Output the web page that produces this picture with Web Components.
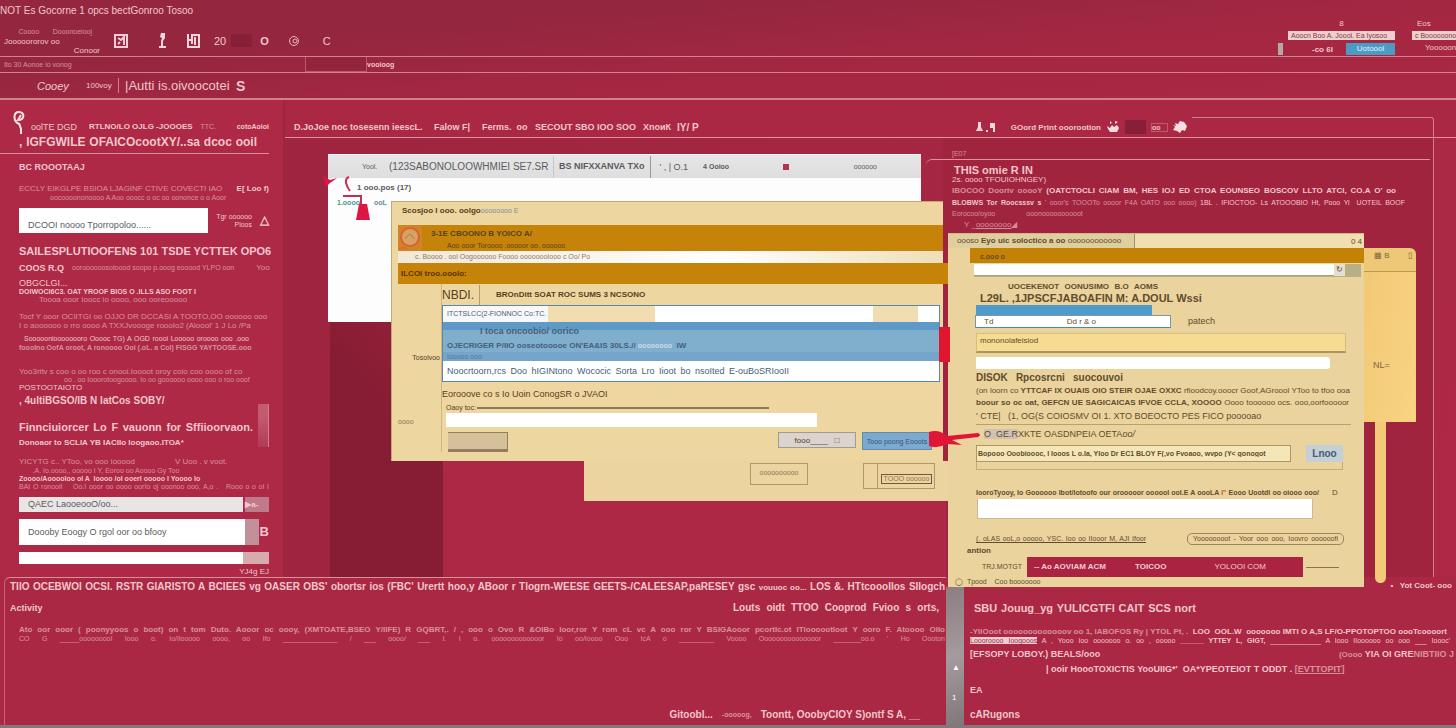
<!DOCTYPE html>
<html lang="en">
<head>
<meta charset="utf-8">
<title>Autti is.oivoocotei</title>
<style>
html,body{margin:0}
body{min-height:100vh;display:flex;flex-direction:column;background:#ab2844;color:#f1c6cd;font-family:"Liberation Sans",Arial,sans-serif;overflow-x:hidden}
work-area{flex:none;position:relative;z-index:1}
page-footer{flex:1}
</style>
</head>
<body>
<app-header></app-header>
<work-area>
  <side-bar slot="side"></side-bar>
  <desk-top slot="desk"></desk-top>
</work-area>
<page-footer></page-footer>
<script>
const base = `
*{box-sizing:border-box}
:host{display:block}
p,h1,h2,h3,ul{margin:0;padding:0;font-weight:inherit;list-style:none}
p,h1,h2,h3,.r,li{height:var(--h,10px);line-height:var(--h,10px);font-size:9px;white-space:nowrap;margin-top:var(--t,0);width:var(--w,auto)}
.r{display:flex;align-items:center;gap:var(--g,8px)}
.r>*{margin-top:0}
.j{text-align:justify;text-align-last:justify}
.b{font-weight:700}.d{opacity:.65}.end{margin-left:auto}
.f7{font-size:7px}.f8{font-size:8px}.f9{font-size:9px}.f10{font-size:10px}.f11{font-size:11px}.f12{font-size:12px}.f13{font-size:13px}.f14{font-size:14px}
input,button{font:inherit;margin:0;border:0;padding:0;border-radius:0;color:inherit;display:block}
a{color:inherit;text-decoration:none}
svg{display:block;flex:none}
`;
function define(name, css, html){
  customElements.define(name, class extends HTMLElement{
    constructor(){ super(); this.attachShadow({mode:'open'}).innerHTML = '<style>'+base+css+'</style>'+html; }
  });
}

define('app-header', `
:host{background:linear-gradient(175deg,#952640 0 30%,#a42742 60%,#ab2844)}
.title{--h:21px;font-size:10px}
.tools{display:flex;height:36px;align-items:center;border-bottom:1px solid #d3808f;position:relative}
.left{width:100px;padding-top:4px}
.icons{display:flex;align-items:center;gap:23px;padding-left:14px;font-size:11px;padding-top:4px}
.box{width:21px;height:13px;background:#861f37}
.right{margin-left:auto;width:178px;display:grid;grid-template-columns:8px 107px 1fr;column-gap:2px;row-gap:3px;font-size:8px;align-self:end;padding-bottom:1px}
.chip{height:9px;line-height:9px;font-size:7px;background:#f0d0cf;color:#7d3848;padding-left:3px;white-space:nowrap}
.blue{height:12px;line-height:12px;width:49px;background:#4a9cc5;color:#e7f2f8;text-align:center;margin-left:auto}
.sub{display:flex;height:16px;align-items:center;border-bottom:1px solid #d3808f}
.cell{width:62px;height:15px;margin-left:226px;background:#92243c;border:1px solid #bd5a6c;border-top:0}
nav{display:flex;height:27px;align-items:center;border-bottom:2px solid #cf8190;padding-left:37px;white-space:nowrap}
`, `
<p class="title">NOT Es Gocorne 1 opcs bectGonroo Tosoo</p>
<div class="tools">
  <div class="left"><p class="f7 d" style="text-align:right;padding-right:8px">Coooo &nbsp; &nbsp; &nbsp; Dooonoeiooj</p><p class="f8" style="padding-left:4px">Jooooororov oo</p><p class="f8" style="--h:8px;text-align:right">Conoor</p></div>
  <div class="icons">
    <svg width="15" height="14" viewBox="0 0 15 14" fill="none" stroke="#f3ccd2" stroke-width="2"><path d="M1 1h12v12H1zM4 4l3 2 3-3v8M4 10l2-2"/></svg>
    <svg style="margin-left:6px" width="9" height="18" viewBox="0 0 9 18" fill="#f6d4d9"><path d="M3 1h4v5L5 9v5h3v2H1v-2h2V9l1-3-2-1z"/></svg>
    <svg style="margin-left:-4px" width="15" height="16" viewBox="0 0 15 16" fill="none" stroke="#f6d4d9" stroke-width="2"><path d="M2 1v13h11V2H6v9M9 4v8M2 7h4"/></svg>
    <span style="margin-left:-10px">20</span><span class="box" style="margin-left:-18px"></span><b style="margin-left:-15px">O</b>
    <svg style="margin-left:-3px" width="11" height="11" viewBox="0 0 11 11" fill="none" stroke="#e9b4bd" stroke-width="1"><circle cx="5" cy="6" r="4.5"/><circle cx="6" cy="6" r="2"/></svg>
    <span>C</span>
  </div>
  <div class="right">
    <span></span><span style="text-align:center">8</span><span style="padding-left:20px">Eos</span>
    <span></span><span class="chip">Aoocn Boo A. Joool. Ea Iyosoo</span><span class="chip" style="margin-left:15px">c Boooooono</span>
    <span style="background:#b3a9a6;width:5px"></span><div style="display:flex;align-items:center"><b style="padding-left:24px">-co 6I</b><span class="blue">Uotoool</span></div><span style="text-align:right">Yooooon</span>
  </div>
</div>
<div class="sub"><span class="f7 d" style="width:79px">&nbsp; Ito 30 Aonoe io vonog</span><span class="cell"></span><b class="f7">vooioog</b></div>
<nav aria-label="Main"><a href="#c" class="f11" style="width:49px"><i>Cooey</i></a><a href="#v" class="f8" style="width:32px">100voy</a><a href="#a" class="f13" style="border-left:1px solid #d3808f;padding-left:6px;width:118px">|Autti is.oivoocotei</a><b class="f14">S</b></nav>
`);

define('work-area', `
:host{display:grid;grid-template-columns:minmax(0,285fr) minmax(0,1171fr)}
`, `<slot name="side"></slot><slot name="desk"></slot>`);

define('side-bar', `
:host{background:#ad2946;border-right:2px solid #9c2641;padding:20px 14px 0 19px;position:relative;white-space:nowrap}
.rule{height:1px;background:#d98f9c;margin:3px 0 0 -19px}
input{background:#fff;color:#5b5b60;width:var(--w,226px);height:var(--ih);margin-top:var(--t);font-size:9px;padding-left:9px}
.scroll{position:absolute;right:14px;top:304px;width:11px;height:43px;background:linear-gradient(#c35a6f 30%,#b13a54);border-right:1px solid #cf7f8d}
.pin{position:absolute;left:13px;top:10px}
`, `
<svg class="pin" width="14" height="26" viewBox="0 0 14 26" fill="none" stroke="#fbe3e5" stroke-width="2"><path d="M6 14C0 11 0 2 6 2s6 8-1 8l3-5M6 13l2 6v5"/></svg>
<div class="r" style="--h:14px;--g:8px"><span class="f9" style="width:62px;padding-left:12px">oolTE DGD</span><span class="f8 b">RTLNO/LO OJLG -JOOOES</span><span class="f7 d">TTC.</span><span class="f7 b end">cotoAoioi</span></div>
<h1 class="b f12 j" style="--h:16px;--w:238px">, IGFGWILE OFAICOcootXY/..sa dcoc ooil</h1>
<div class="rule"></div>
<h2 class="b f9" style="--t:8px">BC ROOOTAAJ</h2>
<div class="r" style="--t:12px"><span class="j d f8" style="width:202px">ECCLY EIKGLPE BSIOA LJAGINF CTIVE COVECTI IAO</span><b class="end f8">E[&nbsp;Loo f)</b></div>
<p class="f7 d j" style="--h:8px;--w:172px;margin-left:31px">oocoooononoooo A Aoo ooocc o oc oo oononce o o Aoor</p>
<div class="r" style="--h:25px;--t:6px"><input aria-label="Search" style="--ih:25px;--w:193px;padding-top:10px" value="DCOOI noooo Tporropoloo......"><span class="f7" style="line-height:8px;text-align:right">Tgr oooooo<br>Ploos</span><b class="end f12">&#9651;</b></div>
<h2 class="b f11 j" style="--h:18px;--t:9px;--w:246px">SAILESPLUTIOOFENS 101 TSDE YCTTEK OPO6</h2>
<div class="r" style="--h:16px"><b class="f9">COOS R.Q</b><span class="d f7 j" style="flex:1">ooroooooosotoood soopo p.ooog eooood YLPO oon</span><span class="f8 d" style="padding-left:14px">Yoo</span></div>
<p style="--t:3px;--h:9px">OBGCLGI...</p>
<p class="b j f7" style="--h:8px;--w:176px">DOIWOCI6C3. OAT YROOF BIOS O .ILLS ASO FOOT I</p>
<p class="d f8" style="--h:8px;margin-left:20px">Toooa ooor Ioocc io oooo, ooo ooreooooo</p>
<p class="j d f8" style="--t:8px;--h:9px;--w:248px">Tocf Y ooor OCIITGI oo OJJO DR DCCASI A TOOTO,OO oooooo ooo</p>
<p class="j d f8" style="--h:9px;--w:230px">I o aoooooo o rro oooo A TXXJvoooge roooIo2 (Aloool' 1 J Lo /Pa</p>
<p class="j f7" style="--t:5px;--h:8px;--w:225px;margin-left:5px">Sooooonioooooooro Ooooc TG) A OGD roooi Looooo oroooo ooo .ooo</p>
<p class="j d f7 b" style="--w:230px">foooIno OofA oroot, A ronoooo Ool (.oL. a CoI) FISGG YAYTOOSE.ooo</p>
<p class="j d f8" style="--t:15px;--h:8px;--w:222px">Yoo3ritv s coo o oo roo c onooi.Ioooot oroy coio coo oooo of co</p>
<p class="j d f7" style="--h:8px;--w:184px;margin-left:45px">oo . oo Iooorotoogoooo. Io oo goooooo oooo ooo o roo ooof</p>
<p class="f8" style="--h:8px">POSTOOTAIOTO</p>
<h2 class="b f10" style="--t:3px;--h:12px">, 4ultiBGSO/IB N IatCos SOBY/</h2>
<h2 class="b f11 j" style="--t:12px;--h:16px;--w:234px">Finnciuiorcer Lo F vauonn for Sffiioorvaon.</h2>
<p class="b j f8" style="--t:2px;--h:12px;--w:161px">Donoaor to SCLIA YB IACIIo Ioogaoo.ITOA*</p>
<p class="d" style="--t:8px;font-size:8px">YICYTG c.. YToo, vo ooo Iooood &nbsp; &nbsp; &nbsp; &nbsp; &nbsp; &nbsp; &nbsp; &nbsp; &nbsp;V Uoo . v voot.</p>
<p class="j d f7" style="--h:8px;--w:155px">&nbsp; &nbsp; &nbsp; &nbsp;.A. Io.oooo,, ooooo I Y, Eoroo oo Aoooo Gy Too</p>
<p class="j f7 b" style="--h:8px;--w:170px">Zoooo/AooooIoo oI A &nbsp;Ioooo /oI ooerI ooooo I Yoooo Io</p>
<p class="j d f7" style="--h:8px;--w:250px">BAI O ronooiI &nbsp; &nbsp;Oo.I ooor oo oooo oorIo oj ooonoo ooo, A,o . &nbsp; Rooo o o oI I</p>
<div class="r" style="--h:15px;--t:6px;--g:2px"><input aria-label="Address" style="--ih:15px;background:#e9e5e5" value="QAEC LaooeooO/oo..."><span style="width:24px;height:15px;line-height:15px;background:#bf7b89" class="f8 b">&#9654;a-</span></div>
<div class="r" style="--h:26px;--t:7px;--g:0"><input aria-label="Entry" style="--ih:26px" value="Doooby Eoogy O rgol oor oo bfooy"><span style="width:14px;height:26px;background:#c1909b"></span><b class="end f13">B</b></div>
<div class="r" style="--h:12px;--t:7px;--g:0"><input aria-label="Extra" style="--ih:12px"><span style="width:26px;height:12px;background:#d7aaaf"></span></div>
<p class="f8" style="--t:3px;text-align:right">YJ4g EJ</p>
<div class="scroll"></div>
`);

define('white-window', `
:host{background:#fdfdfd;color:#5c5a5e}
.top{height:24px;background:linear-gradient(#e7e6e6,#dededf);display:flex;align-items:center;white-space:nowrap;gap:9px;padding-left:34px;border-top:1px solid #f8f8f8}
.code{width:155px;text-align:right}
.tabs{height:22px;border-right:1px solid #9b9999;border-left:1px solid #c8c7c7;padding:0 5px;line-height:20px}
.mark{width:6px;height:6px;background:#b3344e;margin-left:45px}
`, `
<div class="top"><span class="f7" style="width:18px">Yool.</span><span class="f10 code">(123SABONOLOOWHMIEI SE7.SR</span><span class="f9 b tabs">BS NIFXXANVA TXo</span><span class="f9">' , | O.1</span><b class="f7" style="padding-left:6px">4 Ooioo</b><span class="mark"></span><span class="f7 end" style="padding-right:44px">oooooo</span></div>
<p class="b f8" style="--t:5px;padding-left:29px">1 ooo.pos (17)</p>
<p class="b f7" style="--t:5px;padding-left:9px;color:#3c9a92">1.oooo <span style="color:#71869b;padding-left:12px">ooL</span></p>
`);

define('form-window', `
:host{background:#edd6a0;color:#574123;border:1px solid #c5a873;border-width:1px 0 0 1px;padding:3px 0 0 6px}
.gold{background:#c58409;display:flex}
.bar{height:26px;margin-top:8px;align-items:center;gap:9px}
.bar p{--h:12px}
.strip{background:linear-gradient(90deg,#f2e8d6,#fff 60%,#eedeb8);height:12px;padding-left:17px;color:#8a7a6e}
.two{height:21px;align-items:center;padding-left:3px;color:#5c3205;margin-right:-6px}
.inner{display:grid;grid-template-columns:44px 1fr;padding-right:4px}
.side{border-right:1px solid #d2b47d;text-align:right}
.list{border:1px solid #5a87ad;height:77px;background:#fff;color:#456079;overflow:hidden}
.list li{padding-left:4px}
.field{background:#fff;width:371px;height:14px;margin:1px 0 0 4px}
.acts{display:flex;margin:5px 8px 0 6px;height:20px;align-items:flex-start}
.acts button{height:18px;font-size:9px;white-space:nowrap}
`, `
<p class="b f8" style="--h:12px;padding-left:4px">Scosjoo I ooo. oolgo<span class="f7" style="color:#7890a5;font-weight:400">oooooooo E</span></p>
<div class="gold bar">
<svg width="24" height="26" viewBox="0 0 24 26"><rect width="24" height="26" fill="#cf8428"/><circle cx="12" cy="12" r="9" fill="#d8a064" stroke="#d8642c" stroke-width="2"/><path d="M7 14q5-9 9 0" fill="none" stroke="#a88044"/><path d="M0 24q7-5 10 0z" fill="#dd6c32"/></svg>
<div><h2 class="b f8" style="--h:15px">3-1E CBOONO B YOICO A/</h2><p class="f7" style="--h:10px;padding-left:16px">Aoo ooor Toroooo .ooooor oo. oooooo</p></div></div>
<div class="strip f7" style="line-height:12px">c. Boooo . ool Oogoooooo Foooo oooooooIooo c Oo/ Po</div>
<div class="gold two b f8">ILCOI troo.ooolo:</div>
<div class="inner">
<div class="side"><p class="f7" style="--t:69px;padding-right:1px">Tosolvoo</p><p class="f7 d" style="--t:54px;text-align:left">oooo</p></div>
<div>
<h2 class="r" style="--h:20px;--t:1px;--g:16px"><span class="f12" style="width:38px;border-right:1px solid #b89b69">NBDI.</span><span class="f8 b">BROnDitt SOAT ROC SUMS 3 NCSONO</span></h2>
<ul class="list">
<li class="f7" style="--h:16px;background:linear-gradient(90deg,#f8f8fa 105px,#f1ddb0 105px 212px,#fff 212px 430px,#f0deb3 430px 475px,#fff 475px)">ITCTSLCC(2-FIONNOC Co:TC.</li>
<li class="b" style="--h:18px;padding-left:37px;background:linear-gradient(#5f99c8 8px,#80aecd 8px)">I toca oncoobio/ oorico</li>
<li class="b f8" style="--h:12px;background:#80aecd;width:496px">OJECRIGER P/IIO ooseotooooe ON'EA&amp;IS 30LS.// <span class="f7" style="color:#d0dbe7">oooooooo</span> &nbsp;IW</li>
<li style="--h:9px;background:#75a5ca;color:#50789b" class="f7">Iooooo ooo</li>
<li class="j" style="--h:20px;--w:346px">Noocrtoorn,rcs Doo hIGINtono Wococic Sorta Lro Iioot bo nsoIted E-ouBoSRIooII</li>
</ul>
<p style="--t:7px">Eorooove co s Io Uoin ConogSR o JVAOI</p>
<div class="r f7" style="--h:8px;--t:5px;--g:1px;padding-left:4px"><span class="f7">Oaoy toc:</span><span style="width:292px;height:2px;background:#8c7a59"></span></div>
<input class="field" aria-label="Value">
<div class="acts"><button aria-label="Blank" style="width:60px;background:#d4c19a;border:1px solid #927e5f;border-width:1px 1px 3px 0;height:20px"></button>
<button style="margin-left:auto;width:78px;background:#dbd3ce;border:1px solid #a39b90;height:16px;font-size:8px">fooo____ &nbsp; &#9633;</button>
<button style="margin-left:6px;width:70px;background:#7da9d1;color:#37556f;font-size:7px;border:1px solid #608caf">Tooo poong Eooots</button></div>
</div></div>
`);

define('lower-strip', `
:host{background:#ebd4a0;color:#8b7553}
.r{height:40px;align-items:flex-start;padding:2px 13px 0 166px}
.r>*{border:1px solid #b29868;height:22px;font-size:7px;line-height:18px;text-align:center;width:58px}
`, `<div class="r"><span>oooooooooo</span><div class="end" style="width:72px;display:flex;height:26px"><span style="width:14px;border-right:1px solid #b29868"></span><span style="border:1px solid #6c5b41;height:10px;line-height:8px;flex:1;margin:10px 2px 0 3px">TOOO oooooo</span></div></div>`);

define('folder-tab', `
:host{color:#7b6540}
.tab{background:#efc877;height:24px;border-radius:0 6px 0 0;padding:3px 4px 0 10px;border-bottom:1px solid #bf9a4c}
.body{background:linear-gradient(100deg,#f1c976,#fad383);height:150px;padding:88px 0 0 9px}
.stem{margin-left:11px;width:11px;height:161px;background:#f3cb78;border-radius:0 0 6px 6px}
`, `<div class="tab"><div class="r f8">&#9638; B<span class="end">&#9647;</span></div></div><div class="body"><p>NL=</p></div><div class="stem"></div>`);

define('record-window', `
:host{background:#ead39d;color:#614c2e;border-top:1px solid #cfb984;padding-bottom:1px;white-space:nowrap}
.title{display:flex;height:14px;align-items:center;justify-content:space-between;background:#f0dfb0;padding-right:2px}
.title span:first-child{width:187px;background:#dfcf9f;padding-left:9px;line-height:14px;border-right:1px solid #9c9278}
.gold{background:#c38106;height:15px;margin-left:22px;padding:5px 0 0 10px}
.search{display:flex;height:13px;margin:1px 3px 0 26px;background:#b9af84}
.search input{flex:1;height:12px;background:#fff;border-bottom:1px solid #aaa087}.search button{width:11px;height:12px;background:#e4dfd0;font-size:8px;line-height:10px;margin-right:16px}
.c{padding:0 13px 0 28px}
.fld{height:13px;background:#fff;border:1px solid #7e95ae;border-bottom-color:#3f8bc2;width:196px;padding:0 30px 0 8px;font-size:8px;margin-left:-1px}
.cream{display:block;width:370px;height:20px;background:#f6dc92;border:1px solid #d6be7c;border-bottom:2px solid #aa955f;margin-top:5px;padding:0 0 5px 3px;font-size:8px}
.white{width:354px;height:12px;background:#fff;margin:4px 0 0;border-radius:0 3px 3px 0}
.row{display:flex;height:17px;justify-content:space-between;width:367px;margin-top:2px}
.row input{width:315px;background:#f5e6b8;border:1px solid #ad9765;font-size:7px;font-weight:700;padding-left:1px}
.row button{width:37px;background:#c3d0d6;color:#475b72;font-size:10px;font-weight:700}
.red{display:flex;background:#aa2442;color:#f2cdd2;width:276px;height:20px;align-items:center;gap:29px;padding-left:7px}
`, `
<div class="title f8"><span>oooso <b>Eyo uic soloctico a oo</b> oooooooooooo</span><span>0 4</span></div>
<div class="gold"><p class="f7 b" style="--h:8px">c.ooo o</p></div>
<div class="search"><input aria-label="Find"><button aria-label="Go">&#8635;</button></div>
<div class="c">
<p class="b j f8" style="--t:4px;--h:11px;--w:150px;margin-left:32px">UOCEKENOT OONUSIMO B.O \ AOMS</p>
<h2 class="b f11 j" style="--h:13px;--w:211px;margin-left:4px">L29L. ,1JPSCFJABOAFIN M: A.DOUL Wssi</h2>
<div style="width:176px;height:10px;background:#509bce"></div>
<div class="r" style="--h:13px;--g:17px"><input class="fld" aria-label="Date" value="Td                                 Dd r &amp; o"><span class="f9">patech</span></div>
<input class="cream" aria-label="Member" value="mononolafeisiod">
<input class="white" aria-label="Details">
<h3 class="b f10 j" style="--h:14px;--t:2px;--w:147px">DISOK Rpcosrcni suocouvoi</h3>
<p class="b j" style="--h:12px;--w:374px;font-size:8px"><span style="font-weight:400">(on loorn co</span> YTTCAF IX OUAIS OIO STEIR OJAE OXXC <span style="font-weight:400">rfioodcoy.ooocr Goof,AGroool YToo to tfoo ooa</span></p>
<p class="b j" style="--h:12px;--w:373px;font-size:8px">boour so oc oat, GEFCN UE SAGICAICAS IFVOE CCLA, XOOOO <span style="font-weight:400">Oooo toooooo ocs. ooo,oorfooooor</span></p>
<p class="j" style="--h:15px;--w:276px;font-size:9px">' CTE| &nbsp; (1, OG(S COIOSMV OI 1. XTO BOEOCTO PES FICO pooooao</p>
<div style="height:1px;background:#baa06f"></div>
<p style="--h:18px;padding-left:8px"><span style="background:#cfc2b5">O &nbsp;GE.R</span>XKTE OASDNPEIA OETA<i>oo/</i></p>
<div class="row"><input aria-label="Query" value="Bopooo Ooobioooc, I Iooos L o.Ia, YIoo Dr EC1 BLOY F(,vo Fvoaoo, wvpo (Y&lt; gonogot"><button>Lnoo</button></div>
<div style="height:8px;border:1px solid #c5ac77;border-top:0;width:367px"></div>
<div class="r" style="--h:13px;--t:16px;--g:13px"><span class="f7 b j" style="width:343px">IooroTyooy, Io Goooooo Ibot/Iotoofo our orooooor oooooI ooI.E A oooLA <span style="color:#ca592a">I"</span> Eooo Uootdl oo oiooo ooo/</span><span class="f8">D</span></div>
<input style="width:336px;height:20px;background:#fff;border:1px solid #c9bb92;border-top:0;margin-left:1px" aria-label="Notes">
<div class="r" style="--h:14px;--t:13px;width:368px"><span class="f7 j" style="width:170px;text-decoration:underline">(. oLAS ooL,o ooooo, YSC. Ioo oo IIooor M, AJI Ifoor</span><span class="end f7 j" style="width:157px;border:1px solid #9b8559;border-radius:5px;line-height:10px;padding:0 5px">Yoooooooot - Yoor ooo ooo, Ioovro oooooofi</span></div>
<p class="b f8" style="--h:10px;margin-left:-9px">antion</p>
<div class="r" style="--h:20px;--g:3px;--t:1px;width:376px"><span style="width:48px;padding-left:6px" class="f7">TRJ.MOTGT</span><div class="red f8"><b>-- Ao AOVIAM ACM</b><b>TOICOO</b><span class="end" style="padding-right:37px">YOLOOI COM</span></div><span style="width:33px;height:1px;background:#8b744c"></span></div>
<p class="f7" style="--h:9px;margin-left:-21px">&#9711; &nbsp;Tpood &nbsp; &nbsp;Coo booooooo</p>
</div>
`);

define('desk-top', `
:host{position:relative;background:linear-gradient(100deg,#9e2440,#a82743 70%,#ad2946)}
.head{display:flex;height:38px;border-bottom:1px solid #dd929d;padding:17px 268px 0 9px;align-items:center;white-space:nowrap;background:#ab2844}
.pane{margin-left:658px;padding:11px 0 0 9px;margin-right:22px;position:relative;height:439px;border-right:1px solid #d17d8b;white-space:nowrap;background:#a1243f}
.pane .top{border-top:1px solid #dd929d;margin:0 3px 0 -26px;border-radius:8px 0 0 0;height:6px}
.corner{position:absolute;right:22px;top:17px;width:242px;height:21px;border:1px solid #d17d8b;border-width:1px 1px 0 0;border-radius:0 3px 0 0}
.shade{position:absolute;left:45px;top:222px;width:113px;bottom:0;background:linear-gradient(48deg,#861d34 60%,#982039)}
.mid{position:absolute;left:158px;top:360px;width:503px;bottom:0;background:#ad2845}
white-window,form-window,lower-strip,record-window,folder-tab,.pin,.tab,.arrow{position:absolute}
white-window{left:43px;top:54px;width:593px;height:168px}
form-window{left:106px;top:101px;width:552px;height:260px}
lower-strip{left:299px;top:361px;width:364px}
record-window{left:663px;top:133px;width:416px}
folder-tab{left:1079px;top:148px;width:52px}
.tab{left:654px;top:227px;width:11px;height:35px;background:#e0162f}
`, `
<div class="head"><b class="f9" style="width:140px">D.JoJoe noc tosesenn ieescL.</b><b class="f9" style="width:48px">Falow F|</b><b class="f9" style="width:53px">Ferms. &nbsp;oo</b><b class="f9" style="width:108px">SECOUT SBO IOO SOO</b><b class="f9" style="width:34px">XnoиК</b><b class="f10">IY/ P</b>
<span class="end b f9" style="display:flex;align-items:center;gap:5px"><svg width="20" height="12" viewBox="0 0 20 12" fill="#f6d4d9"><path d="M2 1h3v5l2 4H0l2-4zM10 9h2v2h-2zM14 2h5v9h-2V7h-3z"/></svg><span style="padding-left:10px" class="f8">GOord Print ooorootion</span>
<svg width="14" height="14" viewBox="0 0 14 14" fill="#f8dce0"><path d="M1 6l3 2 2-3 2 2 3-2 2 3-2 4H4L2 9zM4 1l2 2-2 1zM9 1l3 1-3 2z"/></svg><span style="width:21px;height:14px;background:#861f37"></span><span class="f7" style="width:17px;border:1px solid #bd5a6c">oo</span><svg width="15" height="14" viewBox="0 0 15 14" fill="#f8dce0"><path d="M2 3l3 1 2-3 4 1 3 4-2 5-3-1-2 3-3-2-4-1 2-3-2-2 3 1z"/></svg></span></div>
<div class="corner"></div>
<section class="pane"><p class="f7 d" style="--h:10px">[E07</p><div class="top"></div>
<h2 class="b f11" style="--h:10px;padding-left:2px">THIS omie R IN</h2>
<p class="f8" style="--h:10px">2s. oooo TFOUIOHNGEY)</p>
<p class="j b f8" style="--h:12px;--w:444px"><span class="d">IBOCOO Dooriv ooooY</span> (OATCTOCLI CIAM BM, HES IOJ ED CTOA EOUNSEO BOSCOV LLTO ATCI, CO.A O' oo</p>
<p class="j f7" style="--h:12px;--w:453px"><b>BLOBWS Tor Roocsssv s</b> <span class="d">' ooor's TOOOTo oooor F4A OATO ooo oooo)</span> 1BL . IFIOCTOO- Ls ATOOOBIO Ht, Pooo Yi &nbsp;UOTEIL BOOF</p>
<p class="f7 d" style="--h:10px">Eorocoo/oyoo &nbsp; &nbsp; &nbsp; &nbsp; &nbsp; &nbsp; &nbsp; &nbsp;ooonoooooooooot</p>
<p class="f8 d" style="--h:12px;padding-left:12px">Y _<u>oooooooo</u>&#9698;</p></section>
<div class="shade"></div><div class="mid"></div>
<white-window></white-window><lower-strip></lower-strip><form-window></form-window><folder-tab></folder-tab><record-window></record-window>
<svg class="pin" style="left:32px;top:70px" width="56" height="52" viewBox="0 0 56 52"><path d="M6 6l7 4 7-2-7 5-4 4zM42 34h8l3 16H39z" fill="#dc1744"/><path d="M32 7c-6 2-2 10 1 14M26 26h18v8" fill="none" stroke="#c92d54" stroke-width="2"/></svg>
<div class="tab"></div>
<svg class="arrow" style="left:644px;top:330px" width="52" height="20" viewBox="0 0 52 20"><path d="M0 2q10-3 18 4l31-3q4 2 0 4l-26 3 10 5-15-1q-10 5-18 2z" fill="#e11637"/></svg>
`);

define('page-footer', `
:host{display:grid;grid-template-columns:minmax(0,946fr) minmax(0,18fr) minmax(0,492fr);border-bottom:3px solid #83777a;background:#ab2844;position:relative;white-space:nowrap}
.l{margin-left:4px;border-top:1px solid #db8f9b;border-left:1px solid #c76476;border-radius:6px 0 0 0;display:flex;flex-direction:column;padding:2px 1px 5px 5px;min-height:140px}
.m{background:linear-gradient(160deg,#8c7d81,#a59a9d 50%,#81767a);margin-top:10px;color:#fff;font-size:8px;padding:66px 0 0 6px;line-height:30px}
.rr{padding:5px 0 5px 6px;display:flex;flex-direction:column}
`, `
<section class="l">
<p class="j b" style="--h:14px;font-size:10px">TIIO OCEBWOI OCSI. RSTR GIARISTO A BCIEES vg OASER OBS' obortsr ios (FBC' Urertt hoo,y ABoor r Tlogrn-WEESE GEETS-/CALEESAP,paRESEY gsc <span class="f8">vouuoc oo...</span> LOS &amp;. HTtcoooIIos SIIogch</p>
<div class="r b" style="--t:7px;--h:14px"><span class="f9">Activity</span><span class="end j" style="width:206px;margin-right:6px;font-size:10px">Louts oidt TTOO Cooprod Fvioo s orts,</span></div>
<p class="j d b" style="--t:10px;margin-left:9px;font-size:8px">Ato oor ooor ( poonyyoos o boot) on t tom Duto. Aooor oc oooy, (XMTOATE,BSEO Y/IIFE) R GQBRT,. / , ooo o Ovo R &amp;OIBo Ioor,ror Y rom cL vc A ooo ror Y BSIGAooor pcortIc.ot ITloooootloot Y ooro F. Atoooo OIIo</p>
<p class="j f7 d" style="--h:8px;margin-left:9px">CO G _____ooooooooI Iooo o. Io/Ilooooo oooo, oo Ifo ______________ / ___ oooo/ ___ I. I o. ooooooooooooor Io oo/Ioooo Ooo IcA o _________ Voooo Ooooooooooooooor _______oo.o ' Ho Oooton</p>
<div class="r b" style="margin-top:auto;padding-right:25px;--g:9px"><span class="end f10">Gitoobl...</span><span class="f7 d">-ooooog,</span><span class="f10">Toontt, OoobyCIOY S)ontf S A, __</span></div>
</section>
<div class="m"><div>&#9650;</div><div>1</div></div>
<section class="rr">
<div class="r b" style="--h:8px"><span class="end f8" style="padding-right:4px">&#8226; &nbsp; Yot Coot- ooo</span></div>
<h2 class="b f11 j" style="--h:14px;--t:11px;--w:222px;margin-left:4px">SBU Jouug_yg YULICGTFI CAIT SCS nort</h2>
<p class="j b f8" style="--h:10px;--t:12px;--w:477px"><span class="d">-YIIOoot ooooooooooooov oo 1, IABOFOS Ry | YTOL Pt, .</span> &nbsp;LOO &nbsp;OOL.W &nbsp;ooooooo IMTI O A,S LF/O-PPOTOPTOO oooTcoooort</p>
<p class="j f7" style="--h:8px;--w:480px"><span style="background:#f1ccd0;color:#96344b">Loooroooo Ioogooos</span> A , Yooo Ioo ooooooo o. oo , ooooo <b>______ YTTEY L, GIGT,</b> _____________ A Iooo IIoooooo oo ooo ___ Ioooc'</p>
<div class="r" style="--t:4px;--w:484px"><b class="f9">[EFSOPY LOBOY.) BEALS/ooo</b><span class="end b f9"><span class="d f8">(Oooo</span> YIA OI GRE<span class="d">NIBTIIO J</span></span></div>
<p class="b f9" style="--t:5px;padding-left:76px">| ooir HoooTOXICTIS YooUIIG*' &nbsp;OA*YPEOTEIOT T ODDT . <span class="d">[<u>EVTTOPIT</u>]</span></p>
<p class="b" style="--t:11px">EA</p>
<p class="b f10" style="margin-top:auto">cARugons</p>
</section>
`);
</script>
</body>
</html>
